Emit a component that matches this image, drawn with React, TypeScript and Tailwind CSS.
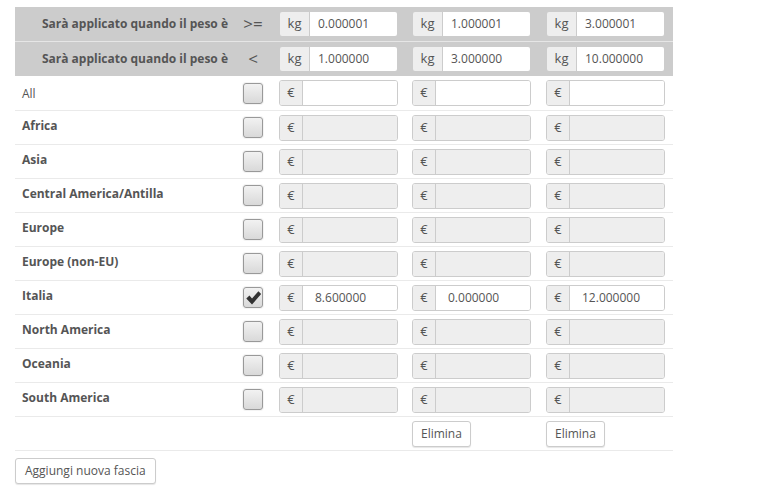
import React from "react";

const zones = [
  { name: "All", bold: false, enabled: true, checked: false, vals: ["", "", ""] },
  { name: "Africa", bold: true, enabled: false, checked: false, vals: ["", "", ""] },
  { name: "Asia", bold: true, enabled: false, checked: false, vals: ["", "", ""] },
  { name: "Central America/Antilla", bold: true, enabled: false, checked: false, vals: ["", "", ""] },
  { name: "Europe", bold: true, enabled: false, checked: false, vals: ["", "", ""] },
  { name: "Europe (non-EU)", bold: true, enabled: false, checked: false, vals: ["", "", ""] },
  { name: "Italia", bold: true, enabled: true, checked: true, vals: ["8.600000", "0.000000", "12.000000"] },
  { name: "North America", bold: true, enabled: false, checked: false, vals: ["", "", ""] },
  { name: "Oceania", bold: true, enabled: false, checked: false, vals: ["", "", ""] },
  { name: "South America", bold: true, enabled: false, checked: false, vals: ["", "", ""] },
];

const colCls = ["w-[134px] pl-[8px]", "w-[133px] pl-[7px]", "w-[135px] pl-[8px]"];

function Group({ addon, value, disabled, kg }: { addon: string; value: string; disabled?: boolean; kg?: boolean }) {
  return (
    <div className="flex h-[26px] w-[119px] rounded-[3px] border border-[#cccccc] overflow-hidden">
      <div
        className={`${kg ? "w-[30px]" : "w-[23px]"} flex items-center justify-center bg-[#eeeeee] border-r border-[#cccccc] text-[13px] text-[#555]`}
      >
        {addon}
      </div>
      <div
        className={`flex-1 flex items-center ${kg ? "pl-[8px]" : "pl-[12px]"} text-[12px] text-[#555] ${disabled ? "bg-[#eeeeee]" : "bg-white"}`}
      >
        {value}
      </div>
    </div>
  );
}

function Checkbox({ checked }: { checked: boolean }) {
  return (
    <div className="w-[20px] h-[21px] rounded-[3px] border border-[#999] bg-gradient-to-b from-[#f2f2f2] to-[#d9d9d9] flex items-center justify-center shadow-[0_0_0_1px_#f4f4f4]">
      {checked && (
        <svg width="17" height="16" viewBox="0 0 16 15">
          <path d="M1.2 8 L4.2 5.2 L6.6 7.9 L12.6 1.2 L15.2 3.8 L6.6 13.6 Z" fill="#333" />
        </svg>
      )}
    </div>
  );
}

export default function App() {
  const font = { fontFamily: '"Open Sans", "Liberation Sans", sans-serif' };
  return (
    <div className="w-[779px] h-[502px] bg-white pl-[15px] pt-[7px]" style={font}>
      <div className="w-[658px]">
        <div className="flex h-[35px] bg-[#cccccc] border-b border-[#e6e6e6]">
          <div className="w-[220px] flex items-center justify-end pr-[7px] text-[12px] font-bold text-[#555]">
            Sarà applicato quando il peso è
          </div>
          <div className="w-[36px] flex items-center justify-center text-[17px] text-[#555]">&gt;=</div>
          {["0.000001", "1.000001", "3.000001"].map((v, i) => (
            <div key={i} className={`${colCls[i]} flex items-center`}>
              <Group addon="kg" value={v} kg />
            </div>
          ))}
        </div>
        <div className="flex h-[34px] bg-[#cccccc]">
          <div className="w-[220px] flex items-center justify-end pr-[7px] text-[12px] font-bold text-[#555]">
            Sarà applicato quando il peso è
          </div>
          <div className="w-[36px] flex items-center justify-center text-[17px] text-[#555]">&lt;</div>
          {["1.000000", "3.000000", "10.000000"].map((v, i) => (
            <div key={i} className={`${colCls[i]} flex items-center`}>
              <Group addon="kg" value={v} kg />
            </div>
          ))}
        </div>
        {zones.map((z, idx) => (
          <div key={z.name} className={`flex ${idx === 0 ? "h-[35px]" : "h-[34px]"} border-b border-[#eaeaea]`}>
            <div
              className={`w-[220px] pl-[7px] ${idx === 0 ? "pt-[9px]" : "pt-[6px]"} text-[12px] text-[#555] ${z.bold ? "font-bold" : ""}`}
            >
              {z.name}
            </div>
            <div className="w-[36px] flex items-center justify-center">
              <Checkbox checked={z.checked} />
            </div>
            {z.vals.map((v, i) => (
              <div key={i} className={`${colCls[i]} flex items-center`}>
                <Group addon="€" value={v} disabled={!z.enabled} />
              </div>
            ))}
          </div>
        ))}
        <div className="flex h-[34px] border-b border-[#eaeaea]">
          <div className="w-[220px]" />
          <div className="w-[36px]" />
          <div className={`${colCls[0]}`} />
          {[1, 2].map((i) => (
            <div key={i} className={`${colCls[i]} flex items-center`}>
              <button className="h-[26px] px-[8px] rounded-[3px] border border-[#ccc] bg-white text-[12px] text-[#555] shadow-[0_1px_1px_rgba(0,0,0,0.1)]">
                Elimina
              </button>
            </div>
          ))}
        </div>
        <div className="pt-[6px]">
          <button className="h-[26px] px-[9px] rounded-[3px] border border-[#ccc] bg-white text-[12px] text-[#555] shadow-[0_1px_1px_rgba(0,0,0,0.1)]">
            Aggiungi nuova fascia
          </button>
        </div>
      </div>
    </div>
  );
}
